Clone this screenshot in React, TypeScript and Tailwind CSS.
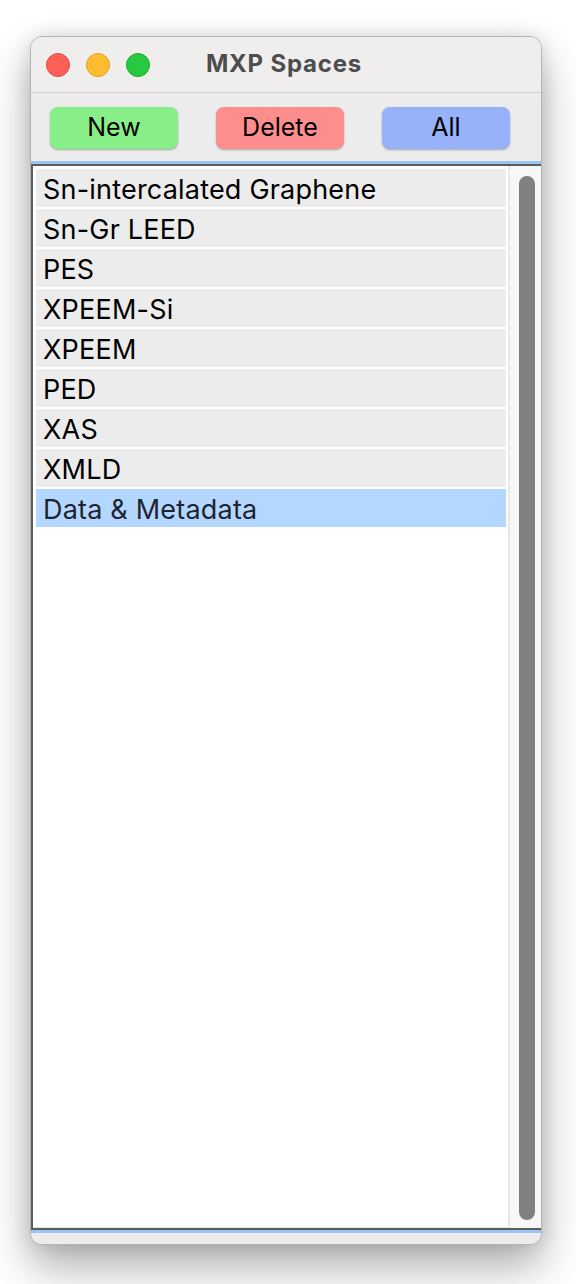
const spaces = [
  "Sn-intercalated Graphene",
  "Sn-Gr LEED",
  "PES",
  "XPEEM-Si",
  "XPEEM",
  "PED",
  "XAS",
  "XMLD",
  "Data & Metadata",
];

function TrafficLights() {
  return (
    <div className="flex items-center gap-[16px] pl-[15px]">
      <span className="w-[24px] h-[24px] rounded-full bg-[#fe5f57] border border-[#e14942]" />
      <span className="w-[24px] h-[24px] rounded-full bg-[#febc2e] border border-[#dfa123]" />
      <span className="w-[24px] h-[24px] rounded-full bg-[#28c840] border border-[#1aab29]" />
    </div>
  );
}

export default function App() {
  const selected = "Data & Metadata";

  return (
    <div className="min-h-screen bg-white pt-[36px] pl-[30px] font-['Inter','Liberation_Sans',sans-serif]">
      <div className="w-[512px] h-[1209px] flex flex-col rounded-[12px] overflow-hidden border border-[#b4b4b4] bg-[#ececec] shadow-[0_22px_44px_rgba(0,0,0,0.32),0_0_18px_rgba(0,0,0,0.12)]">
        {/* title bar */}
        <div className="relative h-[56px] flex items-center bg-[#efeeed] border-b border-[#d2d2d2]">
          <TrafficLights />
          <div className="absolute inset-0 flex items-center justify-center pointer-events-none">
            <span className="text-[24px] font-bold text-[#4d4d4d] tracking-[0.8px] mr-[4px] mb-[1px]">
              MXP Spaces
            </span>
          </div>
        </div>

        {/* toolbar */}
        <div className="h-[68px] flex items-start gap-[38px] pl-[19px] pt-[14px] bg-[#ececec]">
          <button className="w-[128px] h-[42px] rounded-[8px] bg-[#88ef88] text-[25px] text-black shadow-[0_1px_2px_rgba(0,0,0,0.3)]">
            New
          </button>
          <button className="w-[128px] h-[42px] rounded-[8px] bg-[#fe8d8d] text-[25px] text-black shadow-[0_1px_2px_rgba(0,0,0,0.3)]">
            Delete
          </button>
          <button className="w-[128px] h-[42px] rounded-[8px] bg-[#98b1fb] text-[25px] text-black shadow-[0_1px_2px_rgba(0,0,0,0.3)]">
            All
          </button>
        </div>

        <div className="h-[3px] bg-[#9ac5f1]" />

        {/* list */}
        <div className="flex-1 flex min-h-0 bg-white border-t-2 border-l-2 border-b-2 border-[#5c5c5c]">
          <div className="flex-1 flex flex-col gap-[2px] pl-[3px] pt-[3px] pr-[2px] border-b border-[#e4e4e4]">
            {spaces.map((s) => (
              <div
                key={s}
                className={
                  s === selected
                    ? "h-[38px] flex items-center pl-[7px] pt-[4px] bg-[#b3d7ff] text-[#1f2430] text-[27px] tracking-[0.2px]"
                    : "h-[38px] flex items-center pl-[7px] pt-[4px] bg-[#ececec] text-black text-[27px] tracking-[0.2px]"
                }
              >
                {s}
              </div>
            ))}
          </div>
          <div className="w-[33px] flex bg-[#f7f7f7] border-l-2 border-[#e8e8e8] pl-[9px] pt-[10px] pb-[8px]">
            <div className="w-[16px] rounded-full bg-[#808080]" />
          </div>
        </div>

        <div className="h-[3px] bg-[#9ac5f1]" />
        <div className="h-[11px] bg-[#ececec]" />
      </div>
    </div>
  );
}
